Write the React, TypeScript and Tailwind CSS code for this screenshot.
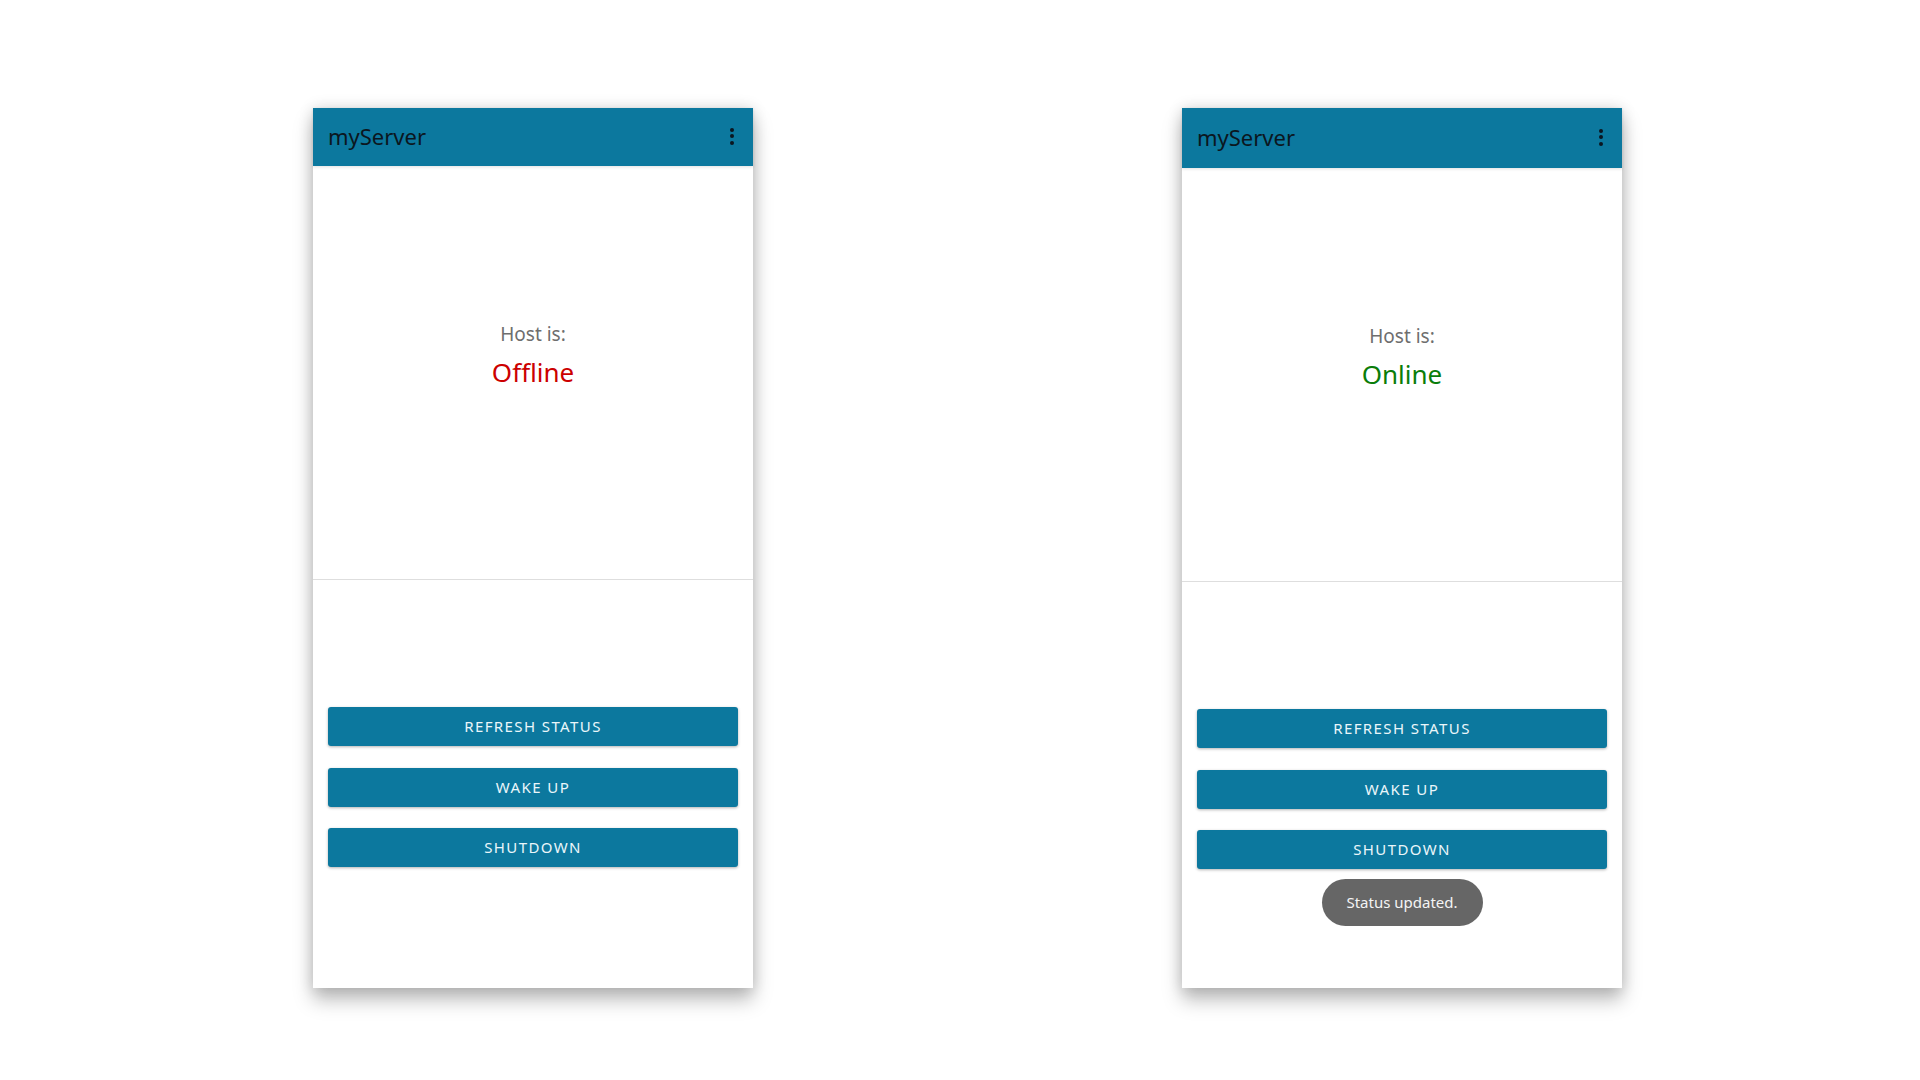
import { useMemo } from "react";

type PhoneProps = {
  online: boolean;
  headerClass: string;
  showToast?: boolean;
};

const actions = ["Refresh status", "Wake up", "Shutdown"];

function Kebab() {
  return (
    <div className="flex flex-col items-center gap-[2.5px]">
      <span className="block h-[4px] w-[4px] rounded-full bg-[#0b1620]" />
      <span className="block h-[4px] w-[4px] rounded-full bg-[#0b1620]" />
      <span className="block h-[4px] w-[4px] rounded-full bg-[#0b1620]" />
    </div>
  );
}

function Phone({ online, headerClass, showToast }: PhoneProps) {
  const status = useMemo(
    () =>
      online
        ? { label: "Online", cls: "text-[#0a7d0a]" }
        : { label: "Offline", cls: "text-[#cc0000]" },
    [online]
  );

  return (
    <div className="flex h-[880px] w-[440px] flex-col bg-white shadow-[0_12px_18px_rgba(0,0,0,0.26),0_0_14px_rgba(0,0,0,0.14)]">
      <header
        className={`flex shrink-0 items-center justify-between bg-[#0c789e] pb-[2px] pl-[15px] pr-[19px] shadow-[0_1px_3px_rgba(0,0,0,0.12)] ${headerClass}`}
      >
        <h1 className="text-[22px] leading-none text-[#0b1620]">myServer</h1>
        <Kebab />
      </header>

      <section className="flex h-[414px] shrink-0 flex-col items-center border-b border-[#dedede] pt-[156px]">
        <p className="text-[19px] leading-[24px] text-[#6e6e6e]">Host is:</p>
        <p className={`mt-[9px] text-[26px] leading-[34px] ${status.cls}`}>
          {status.label}
        </p>
      </section>

      <div className="flex flex-col items-center px-[15px] pt-[127px]">
        <div className="flex w-full flex-col gap-[21.5px]">
          {actions.map((a) => (
            <button
              key={a}
              className="h-[39px] w-full rounded-[3px] bg-[#0c789e] text-[15px] uppercase tracking-[1.4px] text-[#eaf6fa] shadow-[0_1px_3px_rgba(0,0,0,0.3)]"
            >
              {a}
            </button>
          ))}
        </div>
        {showToast && (
          <div className="mt-[10px] flex h-[47px] w-[161px] items-center justify-center rounded-full bg-[#666666] text-[15px] text-[#f4f4f4]">
            Status updated.
          </div>
        )}
      </div>
    </div>
  );
}

export default function App() {
  return (
    <div
      className="min-h-screen w-full bg-white"
      style={{ fontFamily: '"Noto Sans", "Open Sans", sans-serif' }}
    >
      <div className="flex items-start gap-[429px] pl-[313px] pt-[108px]">
        <Phone online={false} headerClass="h-[58px]" />
        <Phone online headerClass="h-[60px]" showToast />
      </div>
    </div>
  );
}
